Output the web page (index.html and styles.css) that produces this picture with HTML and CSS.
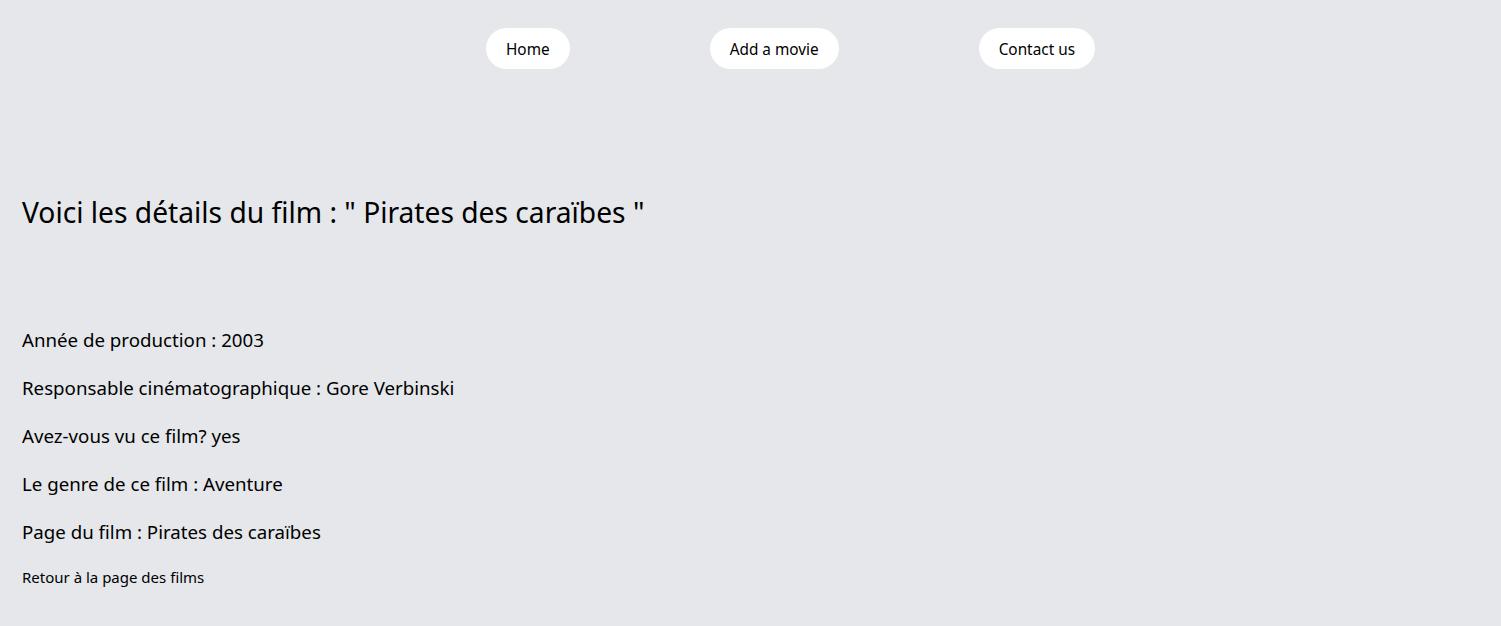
FILE: index.html
```html
<!DOCTYPE html>
<html lang="fr">
<head>
<meta charset="utf-8">
<title>Pirates des caraïbes</title>
<link rel="stylesheet" href="styles.css">
</head>
<body>
<nav class="nav">
  <a class="nav-btn" href="#">Home</a>
  <a class="nav-btn" href="#">Add a movie</a>
  <a class="nav-btn" href="#">Contact us</a>
</nav>
<main class="main">
  <h1 class="title">Voici les détails du film : " Pirates des caraïbes "</h1>
  <div class="details">
    <p class="line">Année de production : 2003</p>
    <p class="line">Responsable cinématographique : Gore Verbinski</p>
    <p class="line">Avez-vous vu ce film? yes</p>
    <p class="line">Le genre de ce film : Aventure</p>
    <p class="line">Page du film : Pirates des caraïbes</p>
  </div>
  <a class="back" href="#">Retour à la page des films</a>
</main>
</body>
</html>
```
FILE: styles.css
```css
html, body {
  margin: 0;
  padding: 0;
}
body {
  background: #e5e7eb;
  color: #000;
  font-family: "Noto Sans", "Open Sans", sans-serif;
  min-height: 626px;
}
.nav {
  display: flex;
  justify-content: flex-start;
  gap: 140px;
  padding: 28px 0 0 486px;
}
.nav-btn {
  display: inline-flex;
  align-items: center;
  height: 41px;
  padding: 1px 20px 0;
  box-sizing: border-box;
  border-radius: 21px;
  background: #fff;
  color: #000;
  text-decoration: none;
  font-size: 15.35px;
}
.main {
  padding: 0 22px;
}
.title {
  margin: 123px 0 0;
  font-size: 28.2px;
  font-weight: 400;
  line-height: 40px;
}
.details {
  margin-top: 94px;
  display: flex;
  flex-direction: column;
  gap: 20px;
}
.line {
  margin: 0;
  font-size: 18.7px;
  line-height: 28px;
}
.back {
  display: block;
  margin-top: 21px;
  font-size: 15px;
  line-height: 20px;
  color: #000;
  text-decoration: none;
}
```
